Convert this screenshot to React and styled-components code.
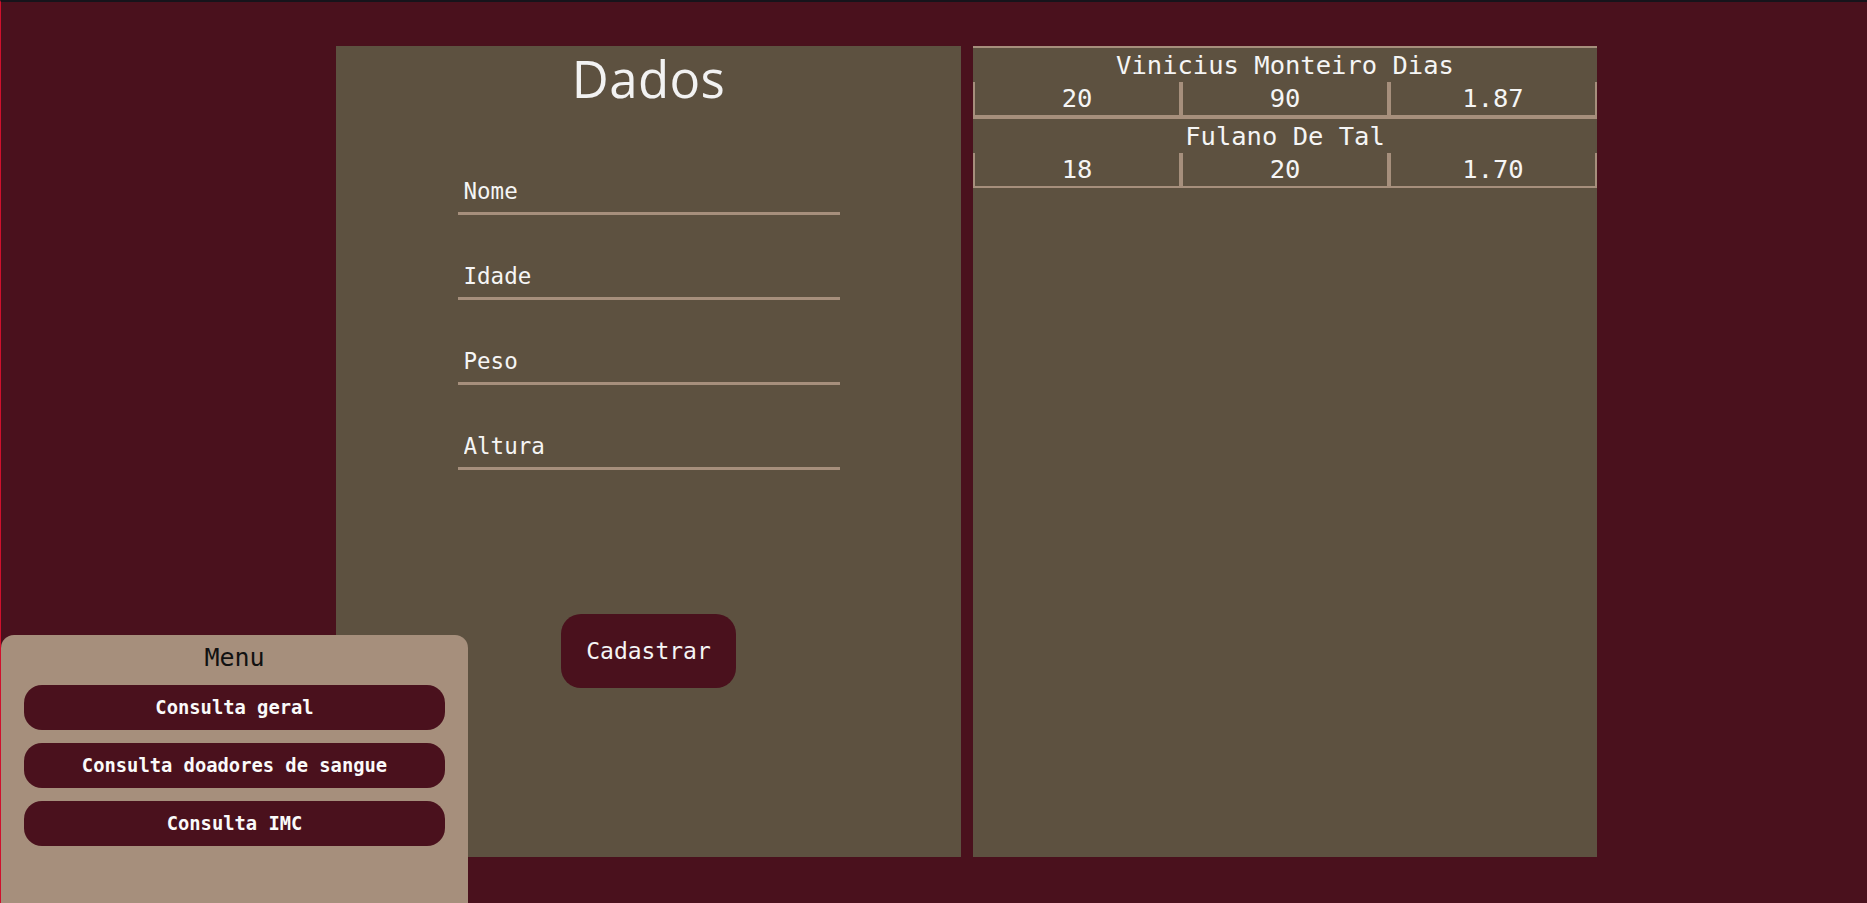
import React from "react";
import styled, { createGlobalStyle } from "styled-components";

// cores do layout
const vinho = "#4a111d";
const marrom = "#5d5140";
const bege = "#a68f7c";
const mono = `"DejaVu Sans Mono", "Liberation Mono", monospace`;

const GlobalStyle = createGlobalStyle`
  html, body {
    margin: 0;
    padding: 0;
    height: 100%;
  }
  body {
    background: ${vinho};
    border-top: 2px solid #16141b;
    border-left: 1px solid #d0102c;
    box-sizing: border-box;
    font-family: ${mono};
    overflow: hidden;
  }
`;

const Pagina = styled.main`
  display: flex;
  align-items: flex-start;
  gap: 12px;
  padding: 44px 0 0 335px;
`;

const Painel = styled.section`
  width: ${(props) => props.largura}px;
  height: 811px;
  background: ${marrom};
  box-sizing: border-box;
`;

const Formulario = styled.form`
  display: flex;
  flex-direction: column;
  align-items: center;
`;

const Titulo = styled.h1`
  margin: 0;
  height: 64px;
  font-family: "Open Sans", "Noto Sans", sans-serif;
  font-weight: 400;
  font-size: 51px;
  letter-spacing: 0.4px;
  line-height: 65px;
  color: #f2f2f2;
`;

const Campos = styled.div`
  display: flex;
  flex-direction: column;
  gap: 39px;
  margin-top: 59px;
`;

const Campo = styled.input`
  width: 382px;
  height: 46px;
  box-sizing: border-box;
  padding: 0 0 0 6px;
  background: transparent;
  border: none;
  border-bottom: 3px solid ${bege};
  outline: none;
  font-family: ${mono};
  font-size: 22.5px;
  color: #f5f5f5;

  &::placeholder {
    color: #f5f5f5;
    opacity: 1;
  }
`;

const BotaoCadastrar = styled.button`
  margin-top: 144px;
  width: 175px;
  height: 74px;
  border: none;
  border-radius: 20px;
  background: ${vinho};
  color: #f5f5f5;
  font-family: ${mono};
  font-size: 23px;
  cursor: pointer;
`;

const Registro = styled.div`
  border-top: 2px solid ${bege};
  border-bottom: 2px solid ${bege};
  color: #f5f5f5;
  font-size: 25.5px;
`;

const Nome = styled.div`
  height: 34px;
  line-height: 34px;
  text-align: center;
`;

const Linha = styled.div`
  display: flex;
  height: 33px;
`;

const Celula = styled.div`
  flex: 1;
  line-height: 33px;
  text-align: center;
  border-left: 2px solid ${bege};
  border-right: 2px solid ${bege};
`;

const Menu = styled.nav`
  position: fixed;
  left: 1px;
  bottom: 0;
  width: 467px;
  height: 268px;
  box-sizing: border-box;
  padding: 8px 23px 0;
  background: ${bege};
  border-radius: 13px 13px 0 0;
  display: flex;
  flex-direction: column;
  gap: 13px;
`;

const MenuTitulo = styled.h2`
  margin: 0;
  text-align: center;
  font-family: ${mono};
  font-weight: 400;
  font-size: 25px;
  line-height: 29px;
  color: #111;
`;

const MenuBotao = styled.button`
  height: 45px;
  border: none;
  border-radius: 18px;
  background: ${vinho};
  color: #fafafa;
  font-family: ${mono};
  font-weight: 700;
  font-size: 18.8px;
  cursor: pointer;
`;

const pessoas = [
  { nome: "Vinicius Monteiro Dias", idade: "20", peso: "90", altura: "1.87" },
  { nome: "Fulano De Tal", idade: "18", peso: "20", altura: "1.70" },
];

function App() {
  return (
    <>
      <GlobalStyle />
      <Pagina>
        <Painel largura={625}>
          <Formulario onSubmit={(e) => e.preventDefault()}>
            <Titulo>Dados</Titulo>
            <Campos>
              <Campo placeholder="Nome" />
              <Campo placeholder="Idade" />
              <Campo placeholder="Peso" />
              <Campo placeholder="Altura" />
            </Campos>
            <BotaoCadastrar type="submit">Cadastrar</BotaoCadastrar>
          </Formulario>
        </Painel>
        <Painel largura={624}>
          {pessoas.map((p) => (
            <Registro key={p.nome}>
              <Nome>{p.nome}</Nome>
              <Linha>
                <Celula>{p.idade}</Celula>
                <Celula>{p.peso}</Celula>
                <Celula>{p.altura}</Celula>
              </Linha>
            </Registro>
          ))}
        </Painel>
      </Pagina>
      <Menu>
        <MenuTitulo>Menu</MenuTitulo>
        <MenuBotao>Consulta geral</MenuBotao>
        <MenuBotao>Consulta doadores de sangue</MenuBotao>
        <MenuBotao>Consulta IMC</MenuBotao>
      </Menu>
    </>
  );
}

export default App;
